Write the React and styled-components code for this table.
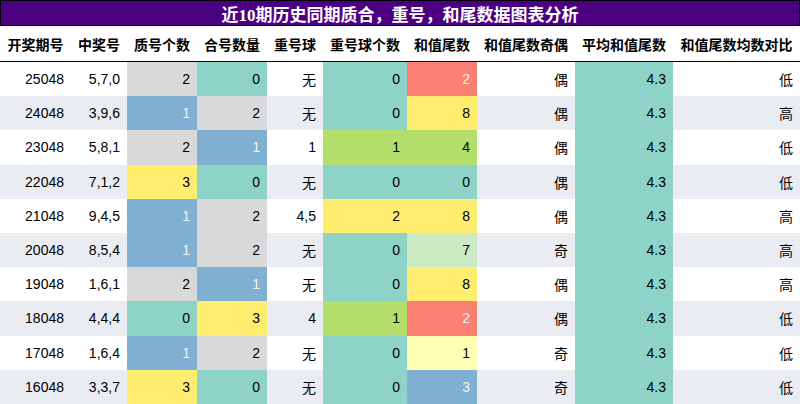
import React from 'react';
import styled, { createGlobalStyle } from 'styled-components';

const GlobalStyle = createGlobalStyle`
  html, body {
    margin: 0;
    padding: 0;
    background: #ffffff;
  }
  body {
    font-family: "Liberation Sans", "Noto Sans CJK SC", sans-serif;
  }
`;

const C = {
  teal: '#8dd3c7',
  gray: '#d9d9d9',
  blue: '#80b1d3',
  yellow: '#ffed6f',
  salmon: '#fb8072',
  green: '#b3de69',
  lightGreen: '#ccebc5',
  lightYellow: '#ffffb3',
};

const DARK = [C.blue, C.salmon];

const headers = [
  '开奖期号', '中奖号', '质号个数', '合号数量', '重号球',
  '重号球个数', '和值尾数', '和值尾数奇偶', '平均和值尾数', '和值尾数均数对比',
];

const widths = '71px 56px 70px 70px 56px 84px 70px 98px 98px 127px';

// [期号, 中奖号, [质号, 色], [合号, 色], 重号球, [重号个数, 色], [尾数, 色], 奇偶, 对比]
const rows = [
  ['25048', '5,7,0', [2, C.gray], [0, C.teal], '无', [0, C.teal], [2, C.salmon], '偶', '低'],
  ['24048', '3,9,6', [1, C.blue], [2, C.gray], '无', [0, C.teal], [8, C.yellow], '偶', '高'],
  ['23048', '5,8,1', [2, C.gray], [1, C.blue], '1', [1, C.green], [4, C.green], '偶', '低'],
  ['22048', '7,1,2', [3, C.yellow], [0, C.teal], '无', [0, C.teal], [0, C.teal], '偶', '低'],
  ['21048', '9,4,5', [1, C.blue], [2, C.gray], '4,5', [2, C.yellow], [8, C.yellow], '偶', '高'],
  ['20048', '8,5,4', [1, C.blue], [2, C.gray], '无', [0, C.teal], [7, C.lightGreen], '奇', '高'],
  ['19048', '1,6,1', [2, C.gray], [1, C.blue], '无', [0, C.teal], [8, C.yellow], '偶', '高'],
  ['18048', '4,4,4', [0, C.teal], [3, C.yellow], '4', [1, C.green], [2, C.salmon], '偶', '低'],
  ['17048', '1,6,4', [1, C.blue], [2, C.gray], '无', [0, C.teal], [1, C.lightYellow], '奇', '低'],
  ['16048', '3,3,7', [3, C.yellow], [0, C.teal], '无', [0, C.teal], [3, C.blue], '奇', '低'],
];

export default function App() {
  return (
    <>
      <GlobalStyle />
      <Page>
        <Title>近10期历史同期质合，重号，和尾数据图表分析</Title>
        <HeadRow>
          {headers.map((h) => (
            <HeadCell key={h}>{h}</HeadCell>
          ))}
        </HeadRow>
        {rows.map((r, i) => {
          const stripe = i % 2 === 1;
          const plain = (v, k) => (
            <Cell key={k} $stripe={stripe}>{v}</Cell>
          );
          const colored = ([v, bg], k) => (
            <Cell key={k} $bg={bg} $light={DARK.includes(bg)}>{v}</Cell>
          );
          return (
            <Row key={r[0]}>
              {plain(r[0], 'a')}
              {plain(r[1], 'b')}
              {colored(r[2], 'c')}
              {colored(r[3], 'd')}
              {plain(r[4], 'e')}
              {colored(r[5], 'f')}
              {colored(r[6], 'g')}
              {plain(r[7], 'h')}
              {colored(['4.3', C.teal], 'i')}
              {plain(r[8], 'j')}
            </Row>
          );
        })}
      </Page>
    </>
  );
}

const Page = styled.div`
  width: 800px;
  height: 404px;
  overflow: hidden;
  display: flex;
  flex-direction: column;
`;

const Title = styled.div`
  box-sizing: border-box;
  height: 26px;
  background: #4b0082;
  border: 1px solid #000;
  color: #ffffff;
  font-family: "Liberation Serif", "Noto Sans CJK SC", serif;
  font-weight: bold;
  font-size: 17px;
  display: flex;
  align-items: center;
  justify-content: center;
`;

const HeadRow = styled.div`
  display: grid;
  grid-template-columns: ${widths};
  height: 35px;
  border-bottom: 1.5px solid #000;
`;

const HeadCell = styled.div`
  display: flex;
  align-items: center;
  justify-content: center;
  font-family: "Noto Sans CJK SC", sans-serif;
  font-weight: bold;
  font-size: 14px;
  color: #000;
  white-space: nowrap;
`;

const Row = styled.div`
  display: grid;
  grid-template-columns: ${widths};
  height: 34.2px;
  flex-shrink: 0;
`;

const Cell = styled.div`
  display: flex;
  align-items: center;
  justify-content: flex-end;
  padding-right: 7px;
  font-size: 14px;
  background: ${(p) => p.$bg || (p.$stripe ? '#e9edf1' : '#ffffff')};
  color: ${(p) => (p.$light ? '#f1f1f1' : '#000000')};
  white-space: nowrap;
`;
